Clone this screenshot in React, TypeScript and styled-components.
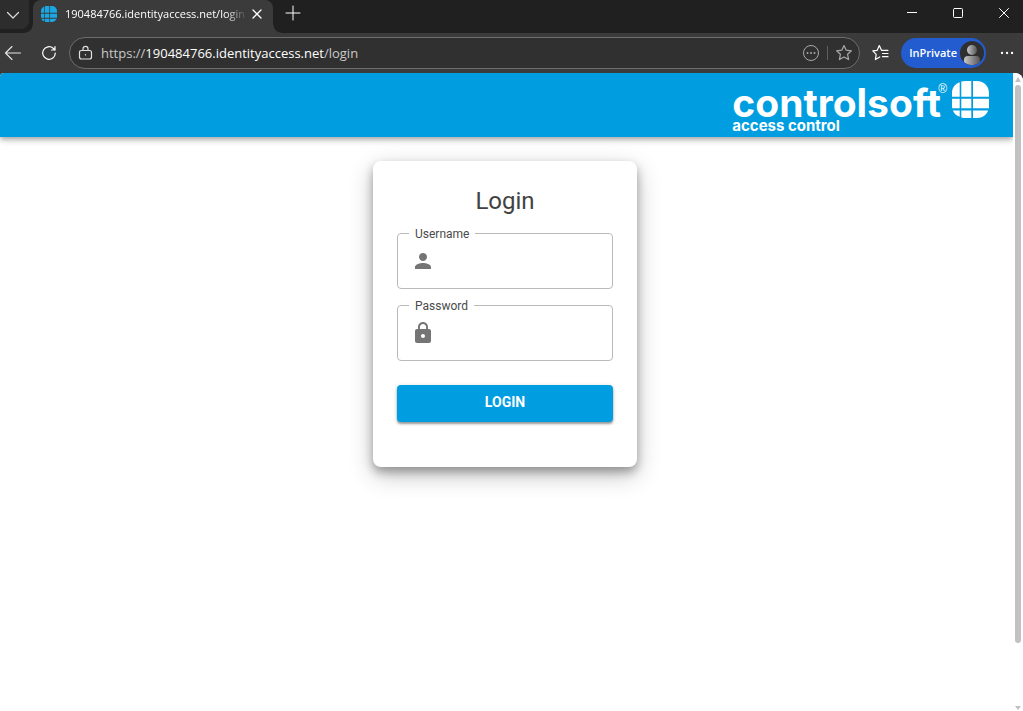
import React from "react";
import styled, { createGlobalStyle } from "styled-components";

const ui = `"Open Sans", "Noto Sans", sans-serif`;
const brandBlue = "#009de0";

const GlobalStyle = createGlobalStyle`
  *, *::before, *::after { box-sizing: border-box; }
  body { margin: 0; background: #fff; }
  button, input { font: inherit; }
`;

const BrowserWindow = styled.div`
  display: flex;
  flex-direction: column;
  height: 100vh;
  background: #3b3b3b;
  font-family: ${ui};
`;

const TabStrip = styled.div`
  display: flex;
  align-items: stretch;
  height: 33px;
  background: #202020;
  color: #fff;
`;

const PlainButton = styled.button`
  display: inline-flex;
  align-items: center;
  justify-content: center;
  flex: none;
  padding: 0;
  border: 0;
  background: none;
  color: #fff;
`;

const TabMenuButton = styled(PlainButton)`
  width: 29px;
  height: 29px;
  padding-right: 4px;
  border-radius: 0 0 8px 0;
  background: #2d2d2d;
`;

const Tab = styled.div`
  position: relative;
  display: flex;
  align-items: center;
  width: 240px;
  margin-left: 4px;
  padding: 0 10px 6px 8px;
  border-radius: 8px 8px 0 0;
  background: #3b3b3b;
  &::before, &::after {
    content: "";
    position: absolute;
    bottom: 0;
    width: 8px;
    height: 8px;
  }
  &::before {
    right: 100%;
    background: radial-gradient(circle at 0 0, transparent 7px, #3b3b3b 8px);
  }
  &::after {
    left: 100%;
    background: radial-gradient(circle at 100% 0, transparent 7px, #3b3b3b 8px);
  }
`;

const TabTitle = styled.span`
  flex: 1;
  min-width: 0;
  margin: 0 4px 0 8px;
  overflow: hidden;
  font-size: 11px;
  line-height: 20px;
  white-space: nowrap;
  mask-image: linear-gradient(to right, #000 88%, transparent);
`;

const NewTabButton = styled(PlainButton)`
  width: 40px;
  padding-bottom: 7px;
`;

const WindowControls = styled.div`
  display: flex;
  gap: 36px;
  margin-left: auto;
  padding: 0 14px 7px 0;
`;

const Toolbar = styled.div`
  display: flex;
  align-items: center;
  height: 40px;
  padding: 0 8px 0 4px;
`;

const RefreshButton = styled(PlainButton)`
  margin: 0 12px 0 19px;
`;

const AddressBar = styled.div`
  display: flex;
  align-items: center;
  flex: 1;
  min-width: 0;
  height: 32px;
  padding: 0 6px 0 8px;
  border: 1px solid #6d6d6d;
  border-radius: 16px;
  background: #303030;
  color: #c8c8c8;
`;

const Url = styled.div`
  flex: 1;
  min-width: 0;
  margin-left: 8px;
  overflow: hidden;
  font-size: 13px;
  line-height: 20px;
  white-space: nowrap;
`;

const Host = styled.span`
  color: #fff;
`;

const Divider = styled.span`
  width: 1px;
  height: 14px;
  margin: 0 7px;
  background: #606060;
`;

const FavoritesButton = styled(PlainButton)`
  margin: 0 12px;
`;

const ProfileButton = styled(PlainButton)`
  gap: 3px;
  height: 30px;
  padding: 0 2px 0 8px;
  border-radius: 15px;
  background: #235ccf;
  font-size: 11px;
  font-weight: 600;
  line-height: 16px;
`;

const MenuButton = styled(PlainButton)`
  margin-left: 13px;
`;

const Viewport = styled.div`
  display: flex;
  flex: 1;
  min-height: 0;
  overflow: hidden;
  border-radius: 4px 8px 0 0;
  background: #fff;
`;

const Page = styled.div`
  flex: 1;
  min-width: 0;
  font-family: Roboto, sans-serif;
`;

const ScrollTrack = styled.div`
  display: flex;
  flex-direction: column;
  align-items: center;
  width: 10px;
  padding: 4px 0 0;
  background: #fff;
`;

const ScrollThumb = styled.div`
  width: 6px;
  flex: 0 1 88%;
  margin: 2px 0 auto;
  border-radius: 3px;
  background: #c1c1c1;
`;

const Header = styled.header`
  display: flex;
  justify-content: flex-end;
  align-items: flex-start;
  height: 64px;
  padding: 8px 24px 0;
  background: ${brandBlue};
  box-shadow: 0 2px 4px -1px rgba(0, 0, 0, 0.2), 0 4px 5px rgba(0, 0, 0, 0.14), 0 1px 10px rgba(0, 0, 0, 0.12);
  color: #fff;
`;

const Wordmark = styled.div`
  display: flex;
  flex-direction: column;
  padding-top: 3px;
  font-family: Inter, sans-serif;
`;

const BrandName = styled.span`
  font-size: 39px;
  font-weight: 700;
  line-height: 38px;
`;

const BrandTagline = styled.span`
  font-size: 15px;
  font-weight: 700;
  line-height: 8px;
`;

const Registered = styled.span`
  margin: 0 5px 0 -3px;
  font-family: "Liberation Sans", sans-serif;
  font-size: 12px;
  line-height: 16px;
`;

const Main = styled.main`
  display: flex;
  justify-content: center;
  padding: 24px 27px 24px 24px;
`;

const LoginCard = styled.form`
  display: flex;
  flex-direction: column;
  width: 264px;
  padding: 24px 24px 45px;
  border-radius: 8px;
  background: #fff;
  box-shadow: 0 5px 10px rgba(0, 0, 0, 0.3), 0 8px 24px rgba(0, 0, 0, 0.24);
`;

const Title = styled.h1`
  margin: 0 0 16px;
  color: #424242;
  font-size: 24px;
  font-weight: 400;
  line-height: 32px;
  text-align: center;
`;

const Field = styled.div`
  position: relative;
  display: flex;
  align-items: center;
  height: 56px;
  margin-bottom: 16px;
  padding: 0 13px;
  border: 1px solid #bababa;
  border-radius: 4px;
  color: #757575;
`;

const FieldLabel = styled.label`
  position: absolute;
  top: -8px;
  left: 11px;
  padding: 0 6px;
  background: #fff;
  color: #4a4a4a;
  font-size: 12px;
  line-height: 16px;
`;

const FieldInput = styled.input`
  flex: 1;
  min-width: 0;
  height: 24px;
  margin-left: 8px;
  padding: 0;
  border: 0;
  outline: 0;
  background: none;
  color: #424242;
  font-size: 16px;
`;

const SubmitButton = styled.button`
  margin-top: 8px;
  padding: 8px 16px 11px;
  border: 0;
  border-radius: 4px;
  background: ${brandBlue};
  box-shadow: 0 2px 2px rgba(0, 0, 0, 0.3), 0 1px 4px rgba(0, 0, 0, 0.2);
  color: #fff;
  font-size: 14px;
  font-weight: 700;
  line-height: 18px;
`;

const GlobeGrid = ({ size, fill }: { size: number; fill: string }) => (
  <svg width={size} height={size} viewBox="0 0 37 37" fill={fill} aria-hidden="true">
    <path d="M7.7 1.2V15.7H0V12C0 6.500 3 2.800 7.700 1.200ZM9.300 .6C12 0 15 0 19.300 0V15.700H9.300ZM21 0H25C32 0 37 5 37 12V15.700H21ZM0 17.700H7.700V27.300H.3L0 25ZM9.300 17.700H19.300V27.300H9.300ZM21 17.700H37V27.300H21ZM.8 29.500H7.700V35.800C4.500 34.800 2 32.500 .8 29.500ZM9.300 29.500H19.300V37H12L9.300 36.500ZM21 29.500H36.200C34.500 34 30.500 37 25 37H21Z" />
  </svg>
);

const Line = ({ d, w = 16, h = 16, width = 1, color = "#fff" }: { d: string; w?: number; h?: number; width?: number; color?: string }) => (
  <svg width={w} height={h} viewBox={`0 0 ${w} ${h}`} fill="none" stroke={color} strokeWidth={width} strokeLinecap="round" strokeLinejoin="round" aria-hidden="true">
    <path d={d} />
  </svg>
);

export default function App() {
  return (
    <>
      <GlobalStyle />
      <BrowserWindow>
        <TabStrip>
          <TabMenuButton aria-label="Tab actions">
            <Line d="M2.5 5.5L8 11L13.5 5.5" width={1.2} color="#dcdcdc" />
          </TabMenuButton>
          <Tab>
            <GlobeGrid size={16} fill="#1aa7e4" />
            <TabTitle>190484766.identityaccess.net/login</TabTitle>
            <PlainButton aria-label="Close tab">
              <Line w={12} h={12} d="M2 2L10 10M10 2L2 10" width={1.3} />
            </PlainButton>
          </Tab>
          <NewTabButton aria-label="New tab">
            <Line d="M8 1V15M1 8H15" />
          </NewTabButton>
          <WindowControls>
            <PlainButton aria-label="Minimize"><Line w={10} h={10} d="M0 4.5H10" /></PlainButton>
            <PlainButton aria-label="Maximize"><Line w={10} h={10} d="M1.5 .5H8.5Q9.5 .5 9.5 1.5V8.5Q9.5 9.5 8.5 9.5H1.5Q.5 9.5 .5 8.5V1.5Q.5 .5 1.5 .5Z" /></PlainButton>
            <PlainButton aria-label="Close window"><Line w={10} h={10} d="M.5 .5L9.5 9.5M9.5 .5L.5 9.5" /></PlainButton>
          </WindowControls>
        </TabStrip>

        <Toolbar>
          <PlainButton aria-label="Back">
            <Line w={18} h={18} d="M16.5 9H2M8 2.5L1.5 9L8 15.5" width={1.1} color="#e6e6e6" />
          </PlainButton>
          <RefreshButton aria-label="Refresh">
            <Line d="M14.3 8A6.3 6.3 0 1 1 12.2 3.3L14 5M14 1.5V5H10.5" width={1.2} />
          </RefreshButton>
          <AddressBar>
            <Line w={15} h={16} d="M3.5 5.5H11.5Q13.5 5.5 13.5 7.5V12Q13.5 14 11.5 14H3.5Q1.5 14 1.5 12V7.5Q1.5 5.5 3.5 5.5ZM5 5.5V3.8A2.5 2.5 0 0 1 10 3.8V5.5M7.5 9.6V9.9" width={1.2} color="#e0e0e0" />
            <Url>https://<Host>190484766.identityaccess.net</Host>/login</Url>
            <PlainButton aria-label="Site options">
              <svg width="18" height="18" viewBox="0 0 18 18" fill="none" stroke="#a8a8a8" aria-hidden="true">
                <circle cx="9" cy="9" r="7.5" />
                <path d="M5.500 9H5.600M9 9H9.100M12.500 9H12.600" strokeWidth="1.8" strokeLinecap="round" />
              </svg>
            </PlainButton>
            <Divider />
            <PlainButton aria-label="Add to favorites">
              <Line w={18} h={18} d="M9 1.5L11.2 6.2L16.4 6.8L12.6 10.3L13.6 15.6L9 13L4.4 15.6L5.4 10.3L1.6 6.8L6.8 6.2Z" color="#a8a8a8" width={1.2} />
            </PlainButton>
          </AddressBar>
          <FavoritesButton aria-label="Favorites">
            <Line w={17} h={18} d="M9.5 6.3L7.3 1.5L5.2 6.3L.8 6.9L4.2 10.3L3.4 15.6L7.8 13M9.5 6.3H16M10.5 9.5H16M10.5 12.7H16" width={1.2} />
          </FavoritesButton>
          <ProfileButton>
            InPrivate
            <svg width="24" height="24" viewBox="0 0 24 24" aria-hidden="true">
              <defs>
                <linearGradient id="avatar" x1="0" x2="1">
                  <stop offset="0" stopColor="#c8c8c8" />
                  <stop offset="1" stopColor="#555" />
                </linearGradient>
              </defs>
              <circle cx="12" cy="12" r="12" fill="#2f2f2f" />
              <circle cx="12" cy="9" r="5" fill="url(#avatar)" />
              <path d="M4 21V19Q4 15 8 15H16Q20 15 20 19V21A12 12 0 0 1 4 21Z" fill="url(#avatar)" />
            </svg>
          </ProfileButton>
          <MenuButton aria-label="Browser menu">
            <Line d="M3 8H3.1M8 8H8.1M13 8H13.1" width={2.3} />
          </MenuButton>
        </Toolbar>

        <Viewport>
          <Page>
            <Header>
              <Wordmark>
                <BrandName>controlsoft</BrandName>
                <BrandTagline>access control</BrandTagline>
              </Wordmark>
              <Registered>®</Registered>
              <GlobeGrid size={37} fill="#fff" />
            </Header>
            <Main>
              <LoginCard onSubmit={(e) => e.preventDefault()}>
                <Title>Login</Title>
                <Field>
                  <svg width="24" height="24" viewBox="0 0 24 24" fill="currentColor" aria-hidden="true">
                    <path d="M12 12c2.21 0 4-1.79 4-4s-1.79-4-4-4-4 1.79-4 4 1.79 4 4 4zm0 2c-2.67 0-8 1.34-8 4v2h16v-2c0-2.66-5.33-4-8-4z" />
                  </svg>
                  <FieldLabel htmlFor="username">Username</FieldLabel>
                  <FieldInput id="username" type="text" />
                </Field>
                <Field>
                  <svg width="24" height="24" viewBox="0 0 24 24" fill="currentColor" aria-hidden="true">
                    <path d="M18 8h-1V6c0-2.76-2.24-5-5-5S7 3.24 7 6v2H6c-1.1 0-2 .9-2 2v10c0 1.1.9 2 2 2h12c1.1 0 2-.9 2-2V10c0-1.1-.9-2-2-2zm-6 9c-1.1 0-2-.9-2-2s.9-2 2-2 2 .9 2 2-.9 2-2 2zm3.1-9H8.9V6c0-1.71 1.39-3.1 3.1-3.1 1.71 0 3.1 1.39 3.1 3.1v2z" />
                  </svg>
                  <FieldLabel htmlFor="password">Password</FieldLabel>
                  <FieldInput id="password" type="password" />
                </Field>
                <SubmitButton type="submit">LOGIN</SubmitButton>
              </LoginCard>
            </Main>
          </Page>
          <ScrollTrack aria-hidden="true">
            <svg width="6" height="6" viewBox="0 0 6 6"><path d="M3 0L6 5H0Z" fill="#c1c1c1" /></svg>
            <ScrollThumb />
            <svg width="6" height="6" viewBox="0 0 6 6"><path d="M0 1H6L3 5Z" fill="#c1c1c1" /></svg>
          </ScrollTrack>
        </Viewport>
      </BrowserWindow>
    </>
  );
}
